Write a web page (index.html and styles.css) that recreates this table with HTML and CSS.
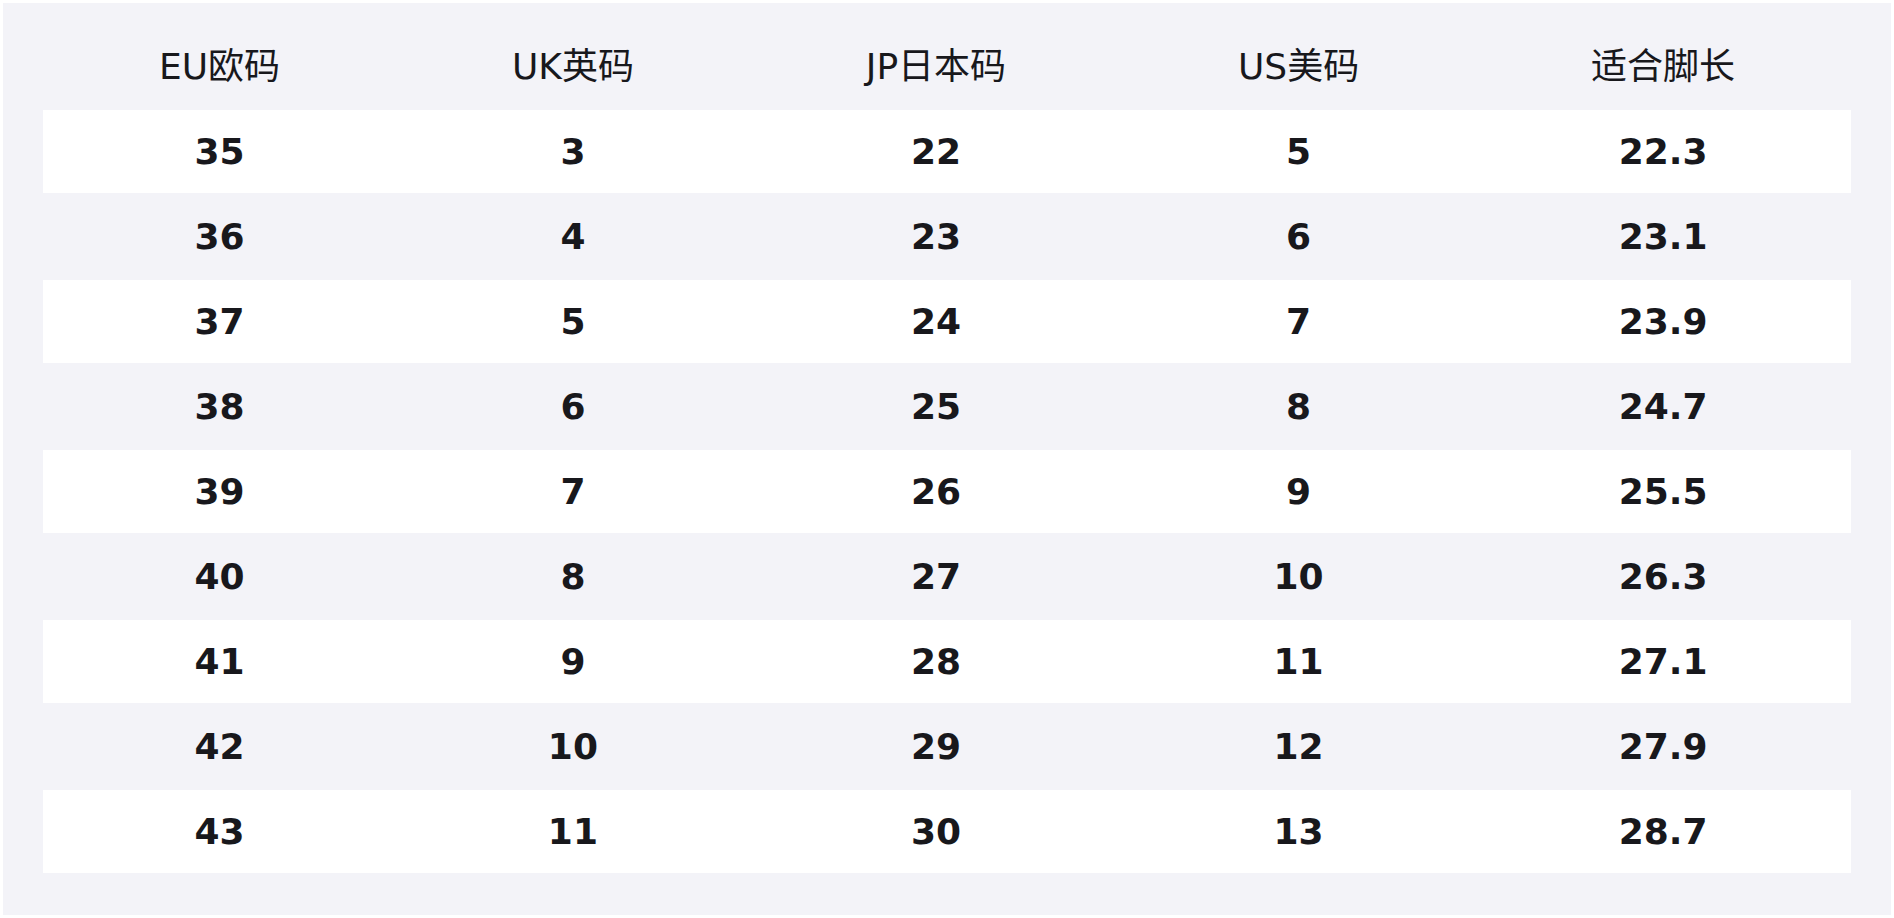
FILE: index.html
```html
<!DOCTYPE html>
<html lang="zh-CN">
<head>
<meta charset="utf-8">
<title>尺码对照表</title>
<link rel="stylesheet" href="styles.css">
</head>
<body>
<div class="panel">
  <div class="size-grid">
    <div class="row head">
      <div class="cell">EU欧码</div><div class="cell">UK英码</div><div class="cell">JP日本码</div><div class="cell">US美码</div><div class="cell">适合脚长</div>
    </div>
    <div class="row odd"><div class="cell">35</div><div class="cell">3</div><div class="cell">22</div><div class="cell">5</div><div class="cell">22.3</div></div>
    <div class="row"><div class="cell">36</div><div class="cell">4</div><div class="cell">23</div><div class="cell">6</div><div class="cell">23.1</div></div>
    <div class="row odd"><div class="cell">37</div><div class="cell">5</div><div class="cell">24</div><div class="cell">7</div><div class="cell">23.9</div></div>
    <div class="row"><div class="cell">38</div><div class="cell">6</div><div class="cell">25</div><div class="cell">8</div><div class="cell">24.7</div></div>
    <div class="row odd"><div class="cell">39</div><div class="cell">7</div><div class="cell">26</div><div class="cell">9</div><div class="cell">25.5</div></div>
    <div class="row"><div class="cell">40</div><div class="cell">8</div><div class="cell">27</div><div class="cell">10</div><div class="cell">26.3</div></div>
    <div class="row odd"><div class="cell">41</div><div class="cell">9</div><div class="cell">28</div><div class="cell">11</div><div class="cell">27.1</div></div>
    <div class="row"><div class="cell">42</div><div class="cell">10</div><div class="cell">29</div><div class="cell">12</div><div class="cell">27.9</div></div>
    <div class="row odd"><div class="cell">43</div><div class="cell">11</div><div class="cell">30</div><div class="cell">13</div><div class="cell">28.7</div></div>
  </div>
</div>
</body>
</html>
```
FILE: styles.css
```css
html, body {
  margin: 0;
  padding: 0;
  background: #ffffff;
}
body {
  padding: 3px;
  font-family: "DejaVu Sans", "Noto Sans CJK SC", sans-serif;
  color: #18181c;
}
.panel {
  box-sizing: border-box;
  height: 912px;
  background: #f3f3f8;
  padding: 40px 40px 42px;
}
.size-grid {
  display: grid;
  grid-template-columns: repeat(5, auto);
  row-gap: 2px;
}
.row {
  display: contents;
}
.cell {
  text-align: center;
  font-size: 36px;
  line-height: 43px;
  font-weight: 700;
  padding: 20px 8px;
  white-space: nowrap;
}
.head .cell {
  font-weight: 400;
  padding: 2px 8px 20px;
}
.odd .cell {
  background: #ffffff;
}
```
